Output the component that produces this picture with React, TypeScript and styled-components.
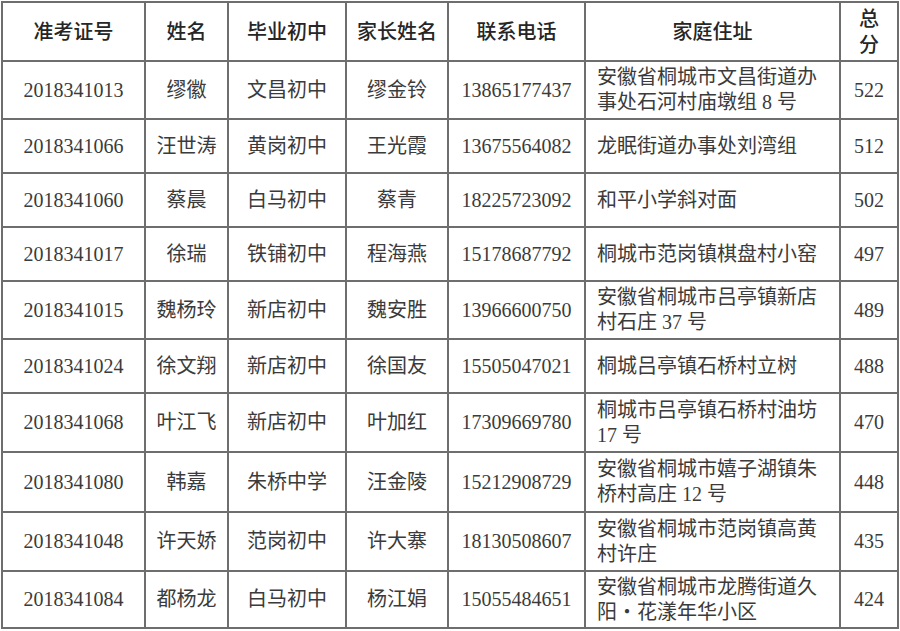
import styled, { createGlobalStyle } from "styled-components";

type Student = {
  id: string;
  name: string;
  school: string;
  parent: string;
  phone: string;
  address: string[];
  score: number;
  height: number;
};

const students: Student[] = [
  { id: "2018341013", name: "缪徽", school: "文昌初中", parent: "缪金铃", phone: "13865177437", address: ["安徽省桐城市文昌街道办", "事处石河村庙墩组 8 号"], score: 522, height: 58 },
  { id: "2018341066", name: "汪世涛", school: "黄岗初中", parent: "王光霞", phone: "13675564082", address: ["龙眠街道办事处刘湾组"], score: 512, height: 54 },
  { id: "2018341060", name: "蔡晨", school: "白马初中", parent: "蔡青", phone: "18225723092", address: ["和平小学斜对面"], score: 502, height: 54 },
  { id: "2018341017", name: "徐瑞", school: "铁铺初中", parent: "程海燕", phone: "15178687792", address: ["桐城市范岗镇棋盘村小窑"], score: 497, height: 54 },
  { id: "2018341015", name: "魏杨玲", school: "新店初中", parent: "魏安胜", phone: "13966600750", address: ["安徽省桐城市吕亭镇新店", "村石庄 37 号"], score: 489, height: 58 },
  { id: "2018341024", name: "徐文翔", school: "新店初中", parent: "徐国友", phone: "15505047021", address: ["桐城吕亭镇石桥村立树"], score: 488, height: 54 },
  { id: "2018341068", name: "叶江飞", school: "新店初中", parent: "叶加红", phone: "17309669780", address: ["桐城市吕亭镇石桥村油坊", "17 号"], score: 470, height: 59 },
  { id: "2018341080", name: "韩嘉", school: "朱桥中学", parent: "汪金陵", phone: "15212908729", address: ["安徽省桐城市嬉子湖镇朱", "桥村高庄 12 号"], score: 448, height: 60 },
  { id: "2018341048", name: "许天娇", school: "范岗初中", parent: "许大寨", phone: "18130508607", address: ["安徽省桐城市范岗镇高黄", "村许庄"], score: 435, height: 59 },
  { id: "2018341084", name: "都杨龙", school: "白马初中", parent: "杨江娟", phone: "15055484651", address: ["安徽省桐城市龙腾街道久", "阳・花漾年华小区"], score: 424, height: 57 },
];

const columns = [143, 83, 118, 102, 137, 255, 58];

const GlobalStyle = createGlobalStyle`
  html, body {
    margin: 0;
    padding: 0;
    background: #ffffff;
  }
  body {
    font-family: "Liberation Serif", "Noto Sans CJK SC", serif;
  }
`;

const Page = styled.div`
  padding: 1px 0 0 1px;
`;

const Table = styled.table`
  border-collapse: collapse;
  table-layout: fixed;
  width: 898px;
  font-family: "Liberation Serif", "Noto Sans CJK SC", serif;
  color: #3b3b3b;
`;

const HeadRow = styled.tr`
  height: 59px;
`;

const HeadCell = styled.th`
  border: 2px solid #6e6e6e;
  font-size: 20px;
  font-weight: 500;
  color: #262626;
  line-height: 26px;
  text-align: center;
  padding: 0 2px;
`;

const Row = styled.tr<{ $h: number }>`
  height: ${(p) => p.$h}px;
`;

const Cell = styled.td<{ $align?: "left" | "center" }>`
  border: 2px solid #6e6e6e;
  font-size: 20px;
  line-height: 25px;
  text-align: ${(p) => p.$align ?? "center"};
  vertical-align: middle;
  padding: ${(p) => (p.$align === "left" ? "0 8px 0 11px" : "0 2px")};
  white-space: nowrap;
`;

const Line = styled.div`
  white-space: nowrap;
`;

export default function App() {
  return (
    <Page>
      <GlobalStyle />
      <Table>
        <colgroup>
          {columns.map((w, i) => (
            <col key={i} style={{ width: w }} />
          ))}
        </colgroup>
        <thead>
          <HeadRow>
            <HeadCell>准考证号</HeadCell>
            <HeadCell>姓名</HeadCell>
            <HeadCell>毕业初中</HeadCell>
            <HeadCell>家长姓名</HeadCell>
            <HeadCell>联系电话</HeadCell>
            <HeadCell>家庭住址</HeadCell>
            <HeadCell>
              总<br />分
            </HeadCell>
          </HeadRow>
        </thead>
        <tbody>
          {students.map((s) => (
            <Row key={s.id} $h={s.height}>
              <Cell>{s.id}</Cell>
              <Cell>{s.name}</Cell>
              <Cell>{s.school}</Cell>
              <Cell>{s.parent}</Cell>
              <Cell>{s.phone}</Cell>
              <Cell $align="left">
                {s.address.map((line, i) => (
                  <Line key={i}>{line}</Line>
                ))}
              </Cell>
              <Cell>{s.score}</Cell>
            </Row>
          ))}
        </tbody>
      </Table>
    </Page>
  );
}
